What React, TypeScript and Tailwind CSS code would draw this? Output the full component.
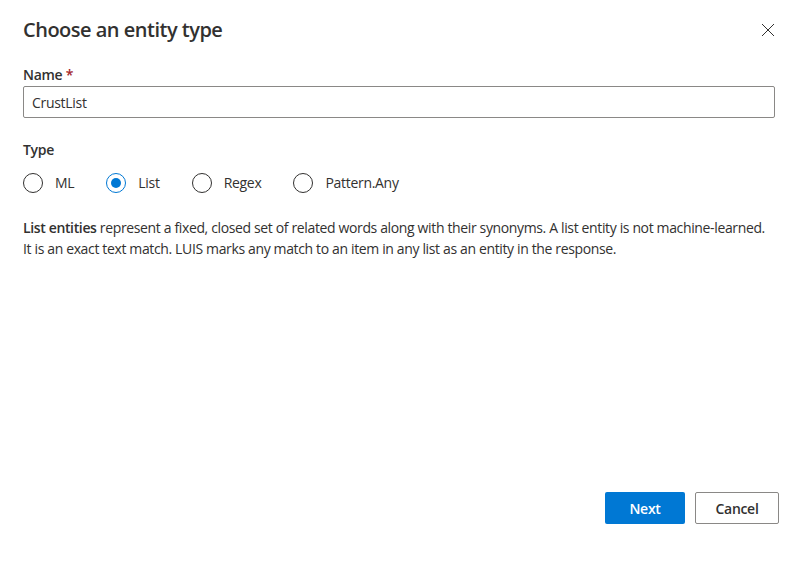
import React from "react";

function Radio({ label, checked }: { label: string; checked?: boolean }) {
  return (
    <div className="flex items-center">
      <div
        className={
          "w-5 h-5 rounded-full border flex items-center justify-center " +
          (checked ? "border-[#0078d4]" : "border-[#323130]")
        }
      >
        {checked && <div className="w-[10px] h-[10px] rounded-full bg-[#0078d4]" />}
      </div>
      <span className="ml-3 text-[14px] text-[#323130]">{label}</span>
    </div>
  );
}

export default function App() {
  return (
    <div
      className="w-[799px] h-[571px] bg-white flex flex-col px-[23px] text-[#323130] tracking-[-0.3px]"
      style={{ fontFamily: '"Segoe UI", "Open Sans", "Liberation Sans", sans-serif' }}
    >
      <div className="flex items-center justify-between pt-[15px] h-[45px]">
        <h1 className="text-[20px] font-semibold leading-[28px] tracking-[-0.5px]">Choose an entity type</h1>
        <svg width="14" height="14" viewBox="0 0 14 14" className="mr-[1px]">
          <path d="M1 1 L13 13 M13 1 L1 13" stroke="#323130" strokeWidth="1" fill="none" />
        </svg>
      </div>
      <div className="mt-[20px] text-[14px] font-semibold leading-[20px]">
        Name <span className="text-[#a4262c]">*</span>
      </div>
      <div className="mt-[1px] mr-[1px] h-[32px] border border-[#8a8886] rounded-[2px] flex items-center px-[8px] text-[14px]">
        CrustList
      </div>
      <div className="mt-[22px] text-[14px] font-semibold leading-[20px]">Type</div>
      <div className="mt-[12px] flex items-center gap-[32px]">
        <Radio label="ML" />
        <Radio label="List" checked />
        <Radio label="Regex" />
        <Radio label="Pattern.Any" />
      </div>
      <p className="mt-[24px] text-[14px] leading-[21px] text-[#323130] tracking-[-0.36px]">
        <span className="font-semibold">List entities</span> represent a fixed, closed set of related words along with their synonyms. A list entity is not machine-learned. It is an exact text match. LUIS marks any match to an item in any list as an entity in the response.
      </p>
      <div className="flex-1" />
      <div className="flex justify-end gap-[10px] mb-[47px] -mr-[3px]">
        <button className="w-[80px] h-[32px] rounded-[2px] bg-[#0078d4] text-white text-[14px] font-semibold">Next</button>
        <button className="w-[84px] h-[32px] rounded-[2px] border border-[#8a8886] bg-white text-[#323130] text-[14px] font-semibold">Cancel</button>
      </div>
    </div>
  );
}
